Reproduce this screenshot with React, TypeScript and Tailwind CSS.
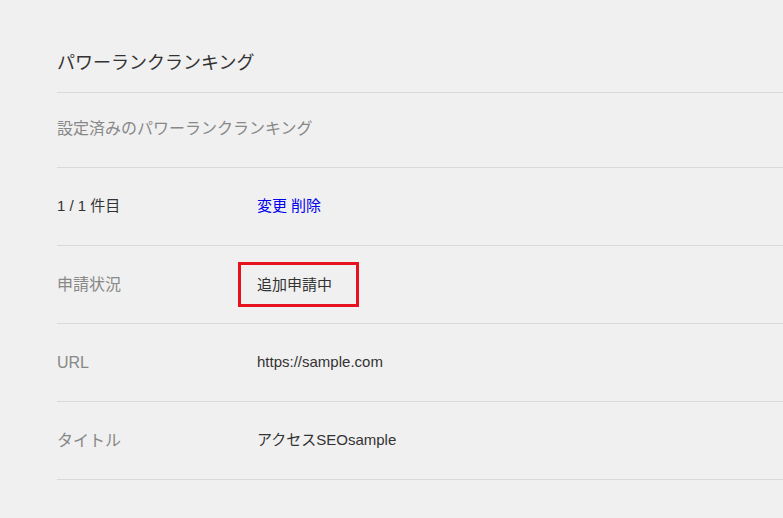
const rows = [
  { label: 'URL', value: 'https://sample.com' },
  { label: 'タイトル', value: 'アクセスSEOsample' },
];

export default function App() {
  return (
    <div
      className="min-h-[518px] w-full bg-[#f0f0f0] pl-[57px] text-[#333]"
      style={{ fontFamily: '"Liberation Sans", "Noto Sans CJK JP", sans-serif' }}
    >
      {/* Header */}
      <div className="border-b border-[#d9d9d9] pt-[50px] pb-[16px]">
        <h1 className="text-[18px] leading-[26px] font-normal">パワーランクランキング</h1>
      </div>
      <div className="border-b border-[#d9d9d9] pt-[24px] pb-[26px]">
        <p className="text-[16px] leading-[24px] text-[#888]">設定済みのパワーランクランキング</p>
      </div>

      {/* Rows */}
      <div className="flex h-[78px] items-center border-b border-[#d9d9d9]">
        <div className="w-[200px] text-[15px] text-[#333]">1 / 1 件目</div>
        <div className="flex gap-1 text-[15px]">
          <a className="text-[#0000ee] cursor-pointer">変更</a>
          <a className="text-[#0000ee] cursor-pointer">削除</a>
        </div>
      </div>
      <div className="flex h-[78px] items-center border-b border-[#d9d9d9]">
        <div className="w-[200px] text-[16px] text-[#888]">申請状況</div>
        <div className="-ml-[19px] border-[3px] border-[#e6121f] pl-4 pr-6 py-[9px] text-[15px] leading-[21px]">
          追加申請中
        </div>
      </div>
      {rows.map((r) => (
        <div key={r.label} className="flex h-[78px] items-center border-b border-[#d9d9d9]">
          <div className="w-[200px] text-[16px] text-[#888]">{r.label}</div>
          <div className="text-[15px] text-[#333]">{r.value}</div>
        </div>
      ))}
    </div>
  );
}
